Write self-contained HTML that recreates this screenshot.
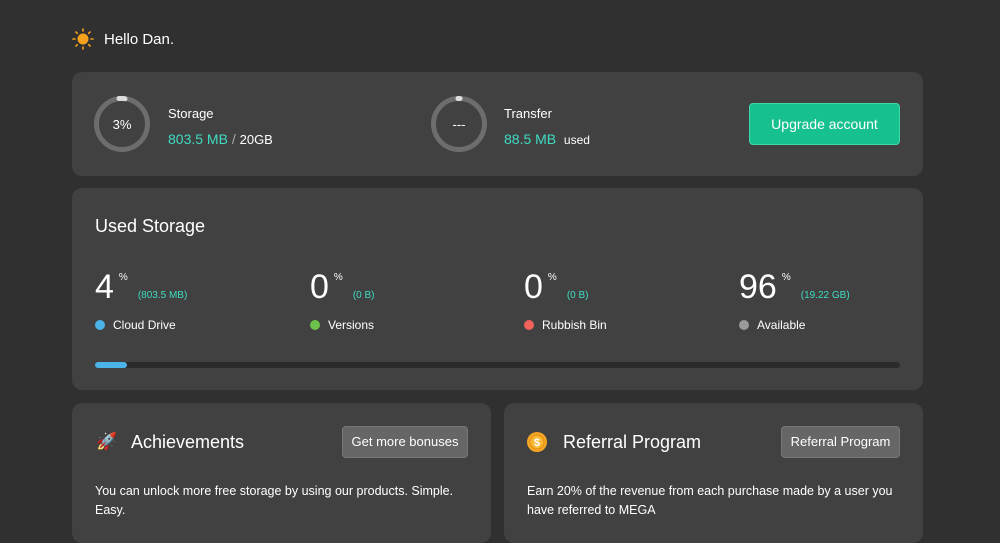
<!DOCTYPE html>
<html><head><style>
body{margin:0;width:1000px;height:531px;background:#303030;font-family:"Liberation Sans",sans-serif;color:#fff;position:relative;overflow:hidden}
.a{position:absolute}
.card{position:absolute;background:#414141;border-radius:10px}
.t{color:#3fdcc2}
.btn{position:absolute;background:#666;border:1px solid #777;border-radius:4px;color:#fff;font-size:13px;text-align:center;box-sizing:border-box}
.dot{display:inline-block;width:10px;height:10px;border-radius:50%;margin-right:8px;vertical-align:-1px}
</style></head><body>
<svg class="a" style="left:72px;top:28px" width="22" height="22" viewBox="0 0 22 22"><circle cx="11" cy="11" r="5.5" fill="#f5a11b"/><g stroke="#f5a11b" stroke-width="1.6" stroke-linecap="round"><path d="M11 1v2M11 19v2M1 11h2M19 11h2M4 4l1.3 1.3M16.7 16.7L18 18M4 18l1.3-1.3M16.7 5.3L18 4"/></g></svg>
<div class="a" style="left:104px;top:31px;font-size:15px">Hello Dan.</div>

<div class="card" style="left:72px;top:72px;width:851px;height:104px"></div>
<svg class="a" style="left:94px;top:96px" width="56" height="56"><circle cx="28" cy="28" r="25.5" fill="none" stroke="#6d6d6d" stroke-width="5"/><path d="M25 2.5 A25.5 25.5 0 0 1 31 2.7" stroke="#ddd" stroke-width="5" fill="none" stroke-linecap="round"/></svg>
<div class="a" style="left:94px;top:117px;width:56px;text-align:center;font-size:13px">3%</div>
<div class="a" style="left:168px;top:106px;font-size:13px">Storage</div>
<div class="a" style="left:168px;top:131px;font-size:14px"><span class="t">803.5 MB</span> <span style="color:#aaa">/</span> <span style="font-size:13px">20GB</span></div>
<svg class="a" style="left:431px;top:96px" width="56" height="56"><circle cx="28" cy="28" r="25.5" fill="none" stroke="#6d6d6d" stroke-width="5"/><path d="M27 2.5 A25.5 25.5 0 0 1 29 2.5" stroke="#ddd" stroke-width="5" fill="none" stroke-linecap="round"/></svg>
<div class="a" style="left:431px;top:117px;width:56px;text-align:center;font-size:13px">---</div>
<div class="a" style="left:504px;top:106px;font-size:13px">Transfer</div>
<div class="a" style="left:504px;top:131px;font-size:14px"><span class="t">88.5 MB</span> &nbsp;<span style="font-size:12px">used</span></div>
<div class="a" style="left:749px;top:103px;width:151px;height:42px;background:#16c08f;border:1px solid #3fd8a8;box-sizing:border-box;border-radius:4px;text-align:center;line-height:40px;font-size:14px">Upgrade account</div>

<div class="card" style="left:72px;top:188px;width:851px;height:202px"></div>
<div class="a" style="left:95px;top:216px;font-size:18px">Used Storage</div>
<div class="a" style="left:95px;top:268px"><span style="font-size:34px">4</span><span style="font-size:10px;vertical-align:18px;margin-left:5px">%</span><span class="t" style="font-size:10px;margin-left:10px">(803.5 MB)</span></div>
<div class="a" style="left:95px;top:318px;font-size:12px"><span class="dot" style="background:#4ab3e8"></span>Cloud Drive</div>
<div class="a" style="left:310px;top:268px"><span style="font-size:34px">0</span><span style="font-size:10px;vertical-align:18px;margin-left:5px">%</span><span class="t" style="font-size:10px;margin-left:10px">(0 B)</span></div>
<div class="a" style="left:310px;top:318px;font-size:12px"><span class="dot" style="background:#6cc24a"></span>Versions</div>
<div class="a" style="left:524px;top:268px"><span style="font-size:34px">0</span><span style="font-size:10px;vertical-align:18px;margin-left:5px">%</span><span class="t" style="font-size:10px;margin-left:10px">(0 B)</span></div>
<div class="a" style="left:524px;top:318px;font-size:12px"><span class="dot" style="background:#f0625a"></span>Rubbish Bin</div>
<div class="a" style="left:739px;top:268px"><span style="font-size:34px">96</span><span style="font-size:10px;vertical-align:18px;margin-left:5px">%</span><span class="t" style="font-size:10px;margin-left:10px">(19.22 GB)</span></div>
<div class="a" style="left:739px;top:318px;font-size:12px"><span class="dot" style="background:#999"></span>Available</div>
<div class="a" style="left:95px;top:362px;width:805px;height:6px;background:#2b2b2b;border-radius:3px"></div>
<div class="a" style="left:95px;top:362px;width:32px;height:6px;background:#4ab3e8;border-radius:3px"></div>

<div class="card" style="left:72px;top:403px;width:419px;height:140px"></div>
<div class="a" style="left:96px;top:432px;font-size:17px">🚀</div>
<div class="a" style="left:131px;top:432px;font-size:18px">Achievements</div>
<div class="btn" style="left:342px;top:426px;width:126px;height:32px;line-height:30px">Get more bonuses</div>
<div class="a" style="left:95px;top:482px;width:380px;font-size:12.5px;line-height:19px">You can unlock more free storage by using our products. Simple. Easy.</div>

<div class="card" style="left:504px;top:403px;width:419px;height:140px"></div>
<svg class="a" style="left:527px;top:432px" width="20" height="20"><circle cx="10" cy="10" r="10" fill="#f5a623"/><circle cx="10" cy="10" r="7" fill="#f7b733" stroke="#e08e10"/><text x="10" y="14" font-size="11" text-anchor="middle" fill="#fff" font-family="Liberation Sans" font-weight="bold">$</text></svg>
<div class="a" style="left:563px;top:432px;font-size:18px">Referral Program</div>
<div class="btn" style="left:781px;top:426px;width:119px;height:32px;line-height:30px">Referral Program</div>
<div class="a" style="left:527px;top:482px;width:380px;font-size:12.5px;line-height:19px">Earn 20% of the revenue from each purchase made by a user you have referred to MEGA</div>
</body></html>
